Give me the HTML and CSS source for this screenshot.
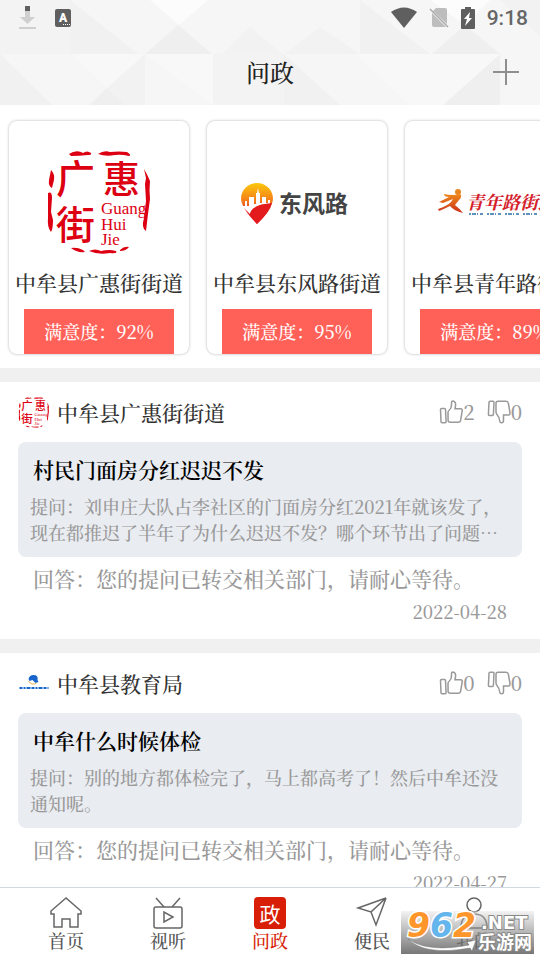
FILE: index.html
```html
<!DOCTYPE html>
<html lang="zh-CN">
<head>
<meta charset="utf-8">
<meta name="viewport" content="width=device-width, initial-scale=1">
<title>问政</title>
<link rel="stylesheet" href="styles.css">
</head>
<body>
<svg class="defs" aria-hidden="true">
  <defs>
    <linearGradient id="pin" x1="0" y1="0" x2="0" y2="1">
      <stop offset="0" stop-color="#fbc80c"/><stop offset=".45" stop-color="#f47a1a"/><stop offset=".7" stop-color="#e6211f"/><stop offset="1" stop-color="#df0716"/>
    </linearGradient>
    <linearGradient id="runner" x1="0" y1="0" x2="0" y2="1">
      <stop offset="0" stop-color="#f08a1c"/><stop offset="1" stop-color="#c92f1b"/>
    </linearGradient>
    <symbol id="seal" viewBox="0 0 105 105">
      <path fill="#dc0012" d="M22 4q6-4 12-2l2 1q4-3 8 0 1 2-3 2-9 1-17 1zM51 4q6-4 12-2 9-1 17 0 5 3 2 4-8-2-14-1-9 2-17-1zM24 98q6-1 12 2l2 2q-8 1-14-4zM42 101q6-3 12 0 8-2 15 0 2 3-6 2-12 2-21-2zM73 100q4-4 9-3-3 4-9 4zM4 20q4 4 3 10l-2 8q-4-2-3-8zM1 43q4-2 4 5l-1 14 2 8q0 9-2 12-4-5-3-14zM97 19q3 5 6 12-1 9 0 18l-2 15-2 17q-5-3-2-13l2-17-1-17 1-6z"/>
      <g class="seal-text" fill="#dc0012">
        <text x="9" y="43" font-size="39">广</text>
        <text x="56" y="43" font-size="37">惠</text>
        <text x="9" y="89" font-size="39">街</text>
      </g>
      <g class="seal-latin" fill="#dc0012" font-size="17">
        <text x="54" y="64">Guang</text><text x="54" y="80">Hui</text><text x="54" y="95">Jie</text>
      </g>
    </symbol>
    <symbol id="up" viewBox="0 0 24 24">
      <path d="M1.5 9.5q0-1 1-1h3q1 0 1 1l.6 12.200q0 1-1 1H3q-1 0-1-1zM9 12.500q0-1.500 1.300-2.500 2.200-1.800 2.200-5V2.500q0-1.500 1.500-1.500 3.300.5 2.400 5.500l-.4 2.300h5.500q2 0 1.700 2l-1.600 9.500q-.4 2-2.400 2h-8q-2 0-2.100-2z"/>
    </symbol>
    <symbol id="down" viewBox="0 0 24 24">
      <path d="M2 2.300q0-1 1-1h3q1 0 1 1l-.6 12.200q0 1-1 1h-3q-1 0-1-1zM9 3.300q0-2 2-2h8q2 0 2.400 2L23 12.500q.3 2.500-1.700 2.500h-4.800v5.500q0 2.300-2 2.300-1.500 0-1.700-1.500-.4-4-2.300-6Q9 13.500 9 12z"/>
    </symbol>
  </defs>
</svg>
<div class="app">
  <header class="top">
    <svg class="facets" viewBox="0 0 540 105" preserveAspectRatio="none" aria-hidden="true">
      <path fill="#f3f3f3" d="M0 0h70v54H0zM213 54h72v51h-72z"/>
      <path fill="#f0f0f0" d="M70 0v54h68zM0 54l52 51H0zM360 0v54h70zM284 54v51h56z"/>
      <path fill="#ededed" d="M178 25l34 29h-67zM107 88l18 17H89zM465 25l35 29h-68zM500 54v51h-57z"/>
      <path fill="#f1f1f1" d="M250 27l32 27h-60zM320 27l40 27h-75zM500 0l40 36V0zM145 54v51h-20l-18-17z"/>
      <path fill="#f9f9f9" d="M72 54h73l-38 34zM355 54h75v51h-20zM430 54h70l-57 51h-13zM145 54h68v51z"/>
      <path fill="#fff" d="M150 0h58l-29 25zM430 0h60l-25 25z"/>
    </svg>
    <div class="status">
      <div class="status-side">
        <svg width="20" height="26" viewBox="0 0 20 26" aria-hidden="true"><path fill="#cfcfcf" d="M7 6h5v6h5l-7.500 7L2 12h5zM1 22h17v2H1z"/><path fill="#5f5f5f" d="M7 1h5v5H7z"/></svg>
        <svg width="16" height="18" viewBox="0 0 16 18" aria-hidden="true"><rect width="16" height="18" rx="2" fill="#5f5f5f"/><text class="glyph" x="8" y="13" font-size="12" text-anchor="middle" fill="#fff">A</text><path stroke="#fff" stroke-dasharray="1 1" d="M8 15.500h7"/></svg>
      </div>
      <div class="status-side">
        <svg width="26" height="22" viewBox="0 0 26 22" aria-hidden="true"><path fill="#5f5f5f" d="M0 5q13-9 26 0L13 21z"/></svg>
        <svg width="20" height="22" viewBox="0 0 20 22" aria-hidden="true"><path fill="#bdbdbd" d="M7 1h9q2 0 2 2v14L4 4zM3 6l14 14H5q-2 0-2-2z"/><path stroke="#a8a8a8" stroke-width="1.500" d="M1 2l18 18"/></svg>
        <svg width="14" height="22" viewBox="0 0 14 22" aria-hidden="true"><path fill="#5f5f5f" d="M4 0h6v2h3q1 0 1 1v18q0 1-1 1H1q-1 0-1-1V3q0-1 1-1h3z"/><path fill="#fff" d="M9 5l-6 7h3l-2 7 7-8H8z"/></svg>
        <span class="clock">9:18</span>
      </div>
    </div>
    <div class="titlebar">
      <h1>问政</h1>
      <button class="add" aria-label="添加"><svg width="28" height="28" viewBox="0 0 28 28" aria-hidden="true"><path stroke="#8f8f8f" stroke-width="2" d="M14 1v26M1 14h26"/></svg></button>
    </div>
  </header>

  <main class="content">
    <section class="cards">
      <article class="card">
        <svg class="logo" viewBox="0 0 105 105" role="img" aria-label="广惠街"><use href="#seal"/></svg>
        <h2>中牟县广惠街街道</h2>
        <p class="score">满意度：92%</p>
      </article>
      <article class="card">
        <svg class="logo" viewBox="4 0 105 105" role="img" aria-label="东风路">
          <path fill="url(#pin)" d="M16 33A16 16 0 0 1 32 48Q32 58 16 74 0 58 0 48A16 16 0 0 1 16 33"/>
          <path fill="#fff" d="M2 56h2v-5h2v5h2V47h5v7h2V43h1l1-5 1 5h1v10h2v-6h4v6h2v-3h2v4Q14 53 9 64L2 57z"/>
          <path fill="#e31b1d" d="M9 64Q10 55 31 53 29 62 16 74z"/>
          <text class="logo-sans" x="38" y="62" font-size="23" fill="#444">东风路</text>
        </svg>
        <h2>中牟县东风路街道</h2>
        <p class="score">满意度：95%</p>
      </article>
      <article class="card">
        <svg class="logo logo-wide" viewBox="0 0 125 105" role="img" aria-label="青年路街道">
          <circle cx="23" cy="42" r="3" fill="#e8851f"/>
          <path fill="url(#runner)" d="M9 44q9 2 16 0 3 2-1 6l-4 5q4 3 8 8-9-2-13-7-6 3-11 5l-1-2q9-3 13-7l2-3-10 4-4-1 10-5q-5 0-5-3z"/>
          <text class="brush" x="31" y="59" font-size="18" fill="#d3202b">青年路街道</text>
          <path stroke="#2a6fa8" stroke-width="1.500" stroke-dasharray="2 1 4 1 1 2 3 4" d="M34 64h90"/>
        </svg>
        <h2>中牟县青年路街道</h2>
        <p class="score">满意度：89%</p>
      </article>
    </section>

    <article class="post">
      <header class="post-head">
        <svg class="avatar" viewBox="0 0 105 105" aria-hidden="true"><use href="#seal"/></svg>
        <h2>中牟县广惠街街道</h2>
        <button class="vote" aria-label="赞 2"><svg aria-hidden="true"><use href="#up"/></svg>2</button>
        <button class="vote" aria-label="踩 0"><svg aria-hidden="true"><use href="#down"/></svg>0</button>
      </header>
      <div class="question">
        <h3>村民门面房分红迟迟不发</h3>
        <p>提问：刘申庄大队占李社区的门面房分红2021年就该发了，现在都推迟了半年了为什么迟迟不发？哪个环节出了问题…</p>
      </div>
      <p class="answer">回答：您的提问已转交相关部门，请耐心等待。</p>
      <time datetime="2022-04-28">2022-04-28</time>
    </article>

    <article class="post">
      <header class="post-head">
        <svg class="avatar" viewBox="0 0 31 31" aria-hidden="true">
          <path fill="#1764cc" d="M10 11q1-4 5-4 5 0 4 5l1 2-3 1-3-3-3 1z"/><path fill="none" stroke="#e9b45a" d="M10 13q3 5 8 2"/>
          <path stroke="#1764cc" stroke-width="2" stroke-dasharray="3 1 2 1 4 1" d="M1 20h29"/>
        </svg>
        <h2>中牟县教育局</h2>
        <button class="vote" aria-label="赞 0"><svg aria-hidden="true"><use href="#up"/></svg>0</button>
        <button class="vote" aria-label="踩 0"><svg aria-hidden="true"><use href="#down"/></svg>0</button>
      </header>
      <div class="question">
        <h3>中牟什么时候体检</h3>
        <p>提问：别的地方都体检完了，马上都高考了！然后中牟还没通知呢。</p>
      </div>
      <p class="answer">回答：您的提问已转交相关部门，请耐心等待。</p>
      <time datetime="2022-04-27">2022-04-27</time>
    </article>
  </main>

  <nav class="tabs">
    <a href="#home"><svg viewBox="0 0 34 34" aria-hidden="true"><path d="M17 2L2 15v3h3v13h8v-8h8v8h8V18h3v-3z"/></svg>首页</a>
    <a href="#media"><svg viewBox="0 0 34 34" aria-hidden="true"><rect x="3" y="11" width="28" height="21" rx="2"/><path d="M5 2l8 9M29 2l-8 9M13 16v10l9-5z"/></svg>视听</a>
    <a href="#ask" class="active"><span class="stamp">政</span>问政</a>
    <a href="#service"><svg viewBox="0 0 34 34" aria-hidden="true"><path d="M31 2L3 12l13 4zM31 2L16 16l5 13z"/></svg>便民</a>
    <a href="#me"><svg viewBox="0 0 34 34" aria-hidden="true"><circle cx="17" cy="9" r="7"/><path d="M4 32q0-14 13-14t13 14z"/></svg>我的</a>
  </nav>
  <div class="watermark">
    <svg viewBox="0 0 133 43" role="img" aria-label="962.NET 乐游网">
      <path fill="#fff" stroke="#777" stroke-width=".5" d="M7 28q20 14 61 6l-2-3 9-2-4 11-2-3Q24 45 7 28z"/>
      <g class="wm-num" font-size="33"><text x="6" y="26" fill="#ff962b">9</text><text x="29" y="26" fill="#64b5ec">6</text><text x="52" y="26" fill="#ff962b">2</text></g>
      <g class="wm-word"><text class="wm-net" x="80" y="18" font-size="18">.NET</text><text x="77" y="38" font-size="18">乐游网</text></g>
    </svg>
  </div>
</div>
</body>
</html>
```

FILE: styles.css
```css
* { box-sizing: border-box; }
body, h1, h2, h3, p { margin: 0; }
body {
  font-family: "Noto Serif CJK SC", "Source Han Serif SC", "Liberation Serif", "Noto Sans CJK SC", serif;
  font-weight: 500;
  color: #333;
  background: #fff;
}
h1, h2 { font-weight: 500; }
h3 { font-weight: 600; }
button { border: 0; padding: 0; background: none; font: inherit; color: inherit; }
svg { display: block; flex: none; }
.defs { position: absolute; width: 0; height: 0; }

.app { position: relative; display: flex; flex-direction: column; height: 100vh; overflow: hidden; }

.top { position: relative; flex: none; background: #f6f6f6; }
.facets { position: absolute; inset: 0; width: 100%; height: 100%; opacity: .7; }
.status { position: relative; display: flex; justify-content: space-between; height: 38px; padding: 5px 12px 0 18px; }
.status-side { display: flex; align-items: center; gap: 12px; height: 26px; }
.status-side:first-child { gap: 17px; }
.clock { font: 500 21px/26px Roboto, sans-serif; color: #666; }
.glyph { font-family: Roboto, sans-serif; font-weight: 900; }
.titlebar { position: relative; display: grid; grid-template-columns: 1fr auto 1fr; align-items: center; height: 67px; padding: 0 20px; }
.titlebar h1 { grid-column: 2; font-size: 24px; line-height: 36px; color: #222; }
.add { justify-self: end; }

.content { flex: 1; min-height: 0; overflow: hidden; }
.cards { display: flex; gap: 18px; padding: 16px 9px 14px; overflow: hidden; }
.card {
  display: flex; flex-direction: column; align-items: center; flex: none;
  width: 180px; padding-top: 29px; border-radius: 8px; background: #fff;
  box-shadow: 0 0 3px rgba(0, 0, 0, .3);
}
.logo { width: 105px; height: 105px; overflow: visible; }
.logo-wide { width: 125px; align-self: flex-start; margin-left: 30px; }
.card h2 { margin: 11px 0; font-size: 21px; line-height: 32px; white-space: nowrap; }
.score { width: 150px; background: #ff6159; color: #fff; font-size: 18px; line-height: 45px; text-align: center; }
.logo-sans { font-family: "Noto Sans CJK SC", sans-serif; font-weight: 700; }
.seal-text { font-family: "Noto Sans CJK SC", sans-serif; font-weight: 500; }
.seal-latin { font-family: "Liberation Serif", serif; font-weight: 400; }
.brush { font-family: "Noto Serif CJK SC", "Noto Sans CJK SC", sans-serif; font-weight: 700; font-style: italic; }

.post { display: flex; flex-direction: column; padding: 0 18px 10px; border-top: 14px solid #f0f0f0; }
.post-head { display: flex; align-items: center; height: 60px; }
.avatar { width: 32px; height: 31px; margin-right: 7px; }
.post-head h2 { flex: 1; font-size: 21px; line-height: 32px; }
.vote { display: flex; align-items: center; margin-left: 12px; font-size: 20px; line-height: 32px; color: #999; }
.vote svg { width: 24px; height: 24px; fill: none; stroke: #999; stroke-width: 1.5; }
.question { padding: 11px 12px 12px; border-radius: 8px; background: #e9ecf1; }
.question h3 { padding-left: 3px; font-size: 21px; line-height: 32px; color: #000; }
.question p { margin-top: 8px; font-size: 18px; line-height: 26px; color: #999; }
.answer { margin-top: 5px; padding-left: 15px; font-size: 21px; line-height: 32px; color: #999; }
.post time { align-self: flex-end; margin-right: 15px; font-size: 18px; line-height: 35px; color: #999; }

.tabs { display: flex; flex: none; height: 73px; padding: 8px 15px 0; border-top: 1px solid #cfdae3; background: #fff; }
.tabs a { display: flex; flex: 1; flex-direction: column; align-items: center; font-size: 18px; line-height: 20px; color: #555; text-decoration: none; }
.tabs svg { width: 34px; height: 34px; fill: none; stroke: #666; stroke-width: 1.5; }
.tabs .active { color: #d81e06; }
.stamp { width: 32px; height: 32px; margin: 1px 0; border-radius: 4px; background: #d81e06; color: #fff; font: 21px/32px "Noto Sans CJK SC", sans-serif; text-align: center; }

.watermark { position: absolute; right: 6px; bottom: 6px; width: 133px; height: 43px; background: linear-gradient(rgba(225, 225, 225, .4), rgba(95, 95, 95, .85)); }
.watermark svg { width: 100%; height: 100%; overflow: visible; }
.wm-num { font-family: "DejaVu Sans", sans-serif; font-weight: 700; font-style: italic; stroke: #fff; stroke-width: 3px; paint-order: stroke; }
.wm-word { font-family: "Noto Sans CJK SC", sans-serif; font-weight: 700; fill: #fff; stroke: #888; stroke-width: 2px; paint-order: stroke; }
.wm-net { font-family: "DejaVu Sans", sans-serif; }
```
